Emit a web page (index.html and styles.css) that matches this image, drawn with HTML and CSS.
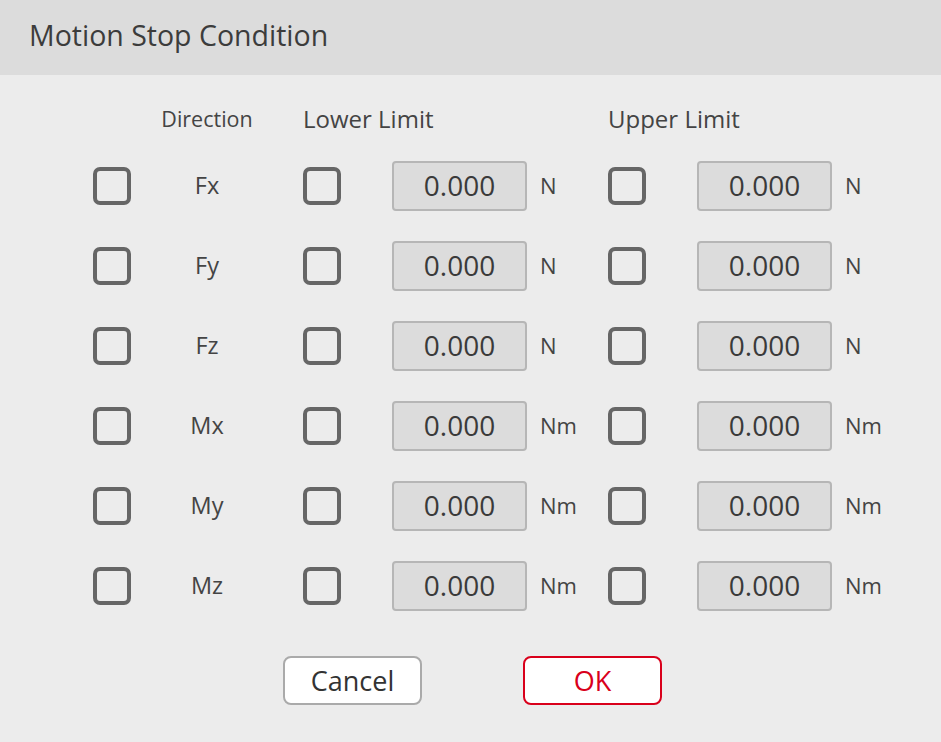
FILE: index.html
```html
<!DOCTYPE html>
<html>
<head>
<meta charset="utf-8">
<link rel="stylesheet" href="styles.css">
</head>
<body>
<div class="dialog">
  <div class="titlebar">Motion Stop Condition</div>
  <div class="content">
    <div class="grid">
      <div class="hdr"></div>
      <div class="hdr hdr-dir">Direction</div>
      <div class="hdr"></div>
      <div class="hdr hdr-span">Lower Limit</div>
      <div class="hdr"></div>
      <div class="hdr hdr-span">Upper Limit</div>
      <div class="hdr"></div>

      <div class="cell"><div class="cb"></div></div><div class="lbl">Fx</div><div class="sp"></div><div class="cell"><div class="cb"></div></div><div class="cell"><div class="inp">0.000</div></div><div class="unit">N</div><div class="cell"><div class="cb"></div></div><div class="cell"><div class="inp">0.000</div></div><div class="unit">N</div>
      <div class="cell"><div class="cb"></div></div><div class="lbl">Fy</div><div class="sp"></div><div class="cell"><div class="cb"></div></div><div class="cell"><div class="inp">0.000</div></div><div class="unit">N</div><div class="cell"><div class="cb"></div></div><div class="cell"><div class="inp">0.000</div></div><div class="unit">N</div>
      <div class="cell"><div class="cb"></div></div><div class="lbl">Fz</div><div class="sp"></div><div class="cell"><div class="cb"></div></div><div class="cell"><div class="inp">0.000</div></div><div class="unit">N</div><div class="cell"><div class="cb"></div></div><div class="cell"><div class="inp">0.000</div></div><div class="unit">N</div>
      <div class="cell"><div class="cb"></div></div><div class="lbl">Mx</div><div class="sp"></div><div class="cell"><div class="cb"></div></div><div class="cell"><div class="inp">0.000</div></div><div class="unit">Nm</div><div class="cell"><div class="cb"></div></div><div class="cell"><div class="inp">0.000</div></div><div class="unit">Nm</div>
      <div class="cell"><div class="cb"></div></div><div class="lbl">My</div><div class="sp"></div><div class="cell"><div class="cb"></div></div><div class="cell"><div class="inp">0.000</div></div><div class="unit">Nm</div><div class="cell"><div class="cb"></div></div><div class="cell"><div class="inp">0.000</div></div><div class="unit">Nm</div>
      <div class="cell"><div class="cb"></div></div><div class="lbl">Mz</div><div class="sp"></div><div class="cell"><div class="cb"></div></div><div class="cell"><div class="inp">0.000</div></div><div class="unit">Nm</div><div class="cell"><div class="cb"></div></div><div class="cell"><div class="inp">0.000</div></div><div class="unit">Nm</div>
    </div>
    <div class="buttons">
      <div class="btn btn-cancel">Cancel</div>
      <div class="btn btn-ok">OK</div>
    </div>
  </div>
</div>
</body>
</html>
```
FILE: styles.css
```css
html, body {
  margin: 0;
  padding: 0;
  background: #ececec;
}
body {
  font-family: "Open Sans", "Noto Sans", sans-serif;
  color: #3a3a3a;
  width: 941px;
  height: 742px;
  overflow: hidden;
}
.titlebar {
  height: 75px;
  background: #dcdcdc;
  box-sizing: border-box;
  padding-left: 29px;
  padding-top: 15px;
  font-size: 28.5px;
  line-height: 40px;
  color: #3c3c3c;
}
.content {
  padding-top: 25px;
}
.grid {
  display: grid;
  margin-left: 93px;
  grid-template-columns: 60px 108px 42px 89px 148px 68px 89px 148px 60px;
  grid-template-rows: 41px repeat(6, 80px);
  row-gap: 0;
}
.hdr {
  display: flex;
  align-items: center;
  font-size: 24px;
  color: #444;
  white-space: nowrap;
  margin-bottom: 5px;
}
.hdr-dir {
  justify-content: center;
  font-size: 21.5px;
}
.hdr-span { grid-column: span 2; }
.cell, .lbl, .unit, .sp {
  display: flex;
  align-items: center;
  position: relative;
  top: 5px;
}
.cb {
  width: 38px;
  height: 38px;
  box-sizing: border-box;
  border: 4px solid #666;
  border-radius: 7px;
}
.lbl {
  justify-content: center;
  font-size: 23.5px;
  color: #444;
  margin-top: -2px;
}
.inp {
  width: 135px;
  height: 50px;
  box-sizing: border-box;
  background: #dcdcdc;
  border: 2px solid #b6b6b6;
  border-radius: 4px;
  display: flex;
  align-items: center;
  justify-content: center;
  font-size: 28px;
  color: #3a3a3a;
  padding-bottom: 2px;
}
.unit {
  font-size: 22px;
  color: #444;
  margin-top: -2px;
}
.buttons {
  display: flex;
  gap: 101px;
  margin-top: 35px;
  margin-left: 283px;
}
.btn {
  width: 139px;
  height: 49px;
  box-sizing: border-box;
  border-radius: 8px;
  background: #fff;
  display: flex;
  align-items: center;
  justify-content: center;
  font-size: 27px;
}
.btn-cancel {
  border: 2px solid #aaaaaa;
  color: #333;
}
.btn-ok {
  border: 2px solid #d9001b;
  color: #d9001b;
}
```
